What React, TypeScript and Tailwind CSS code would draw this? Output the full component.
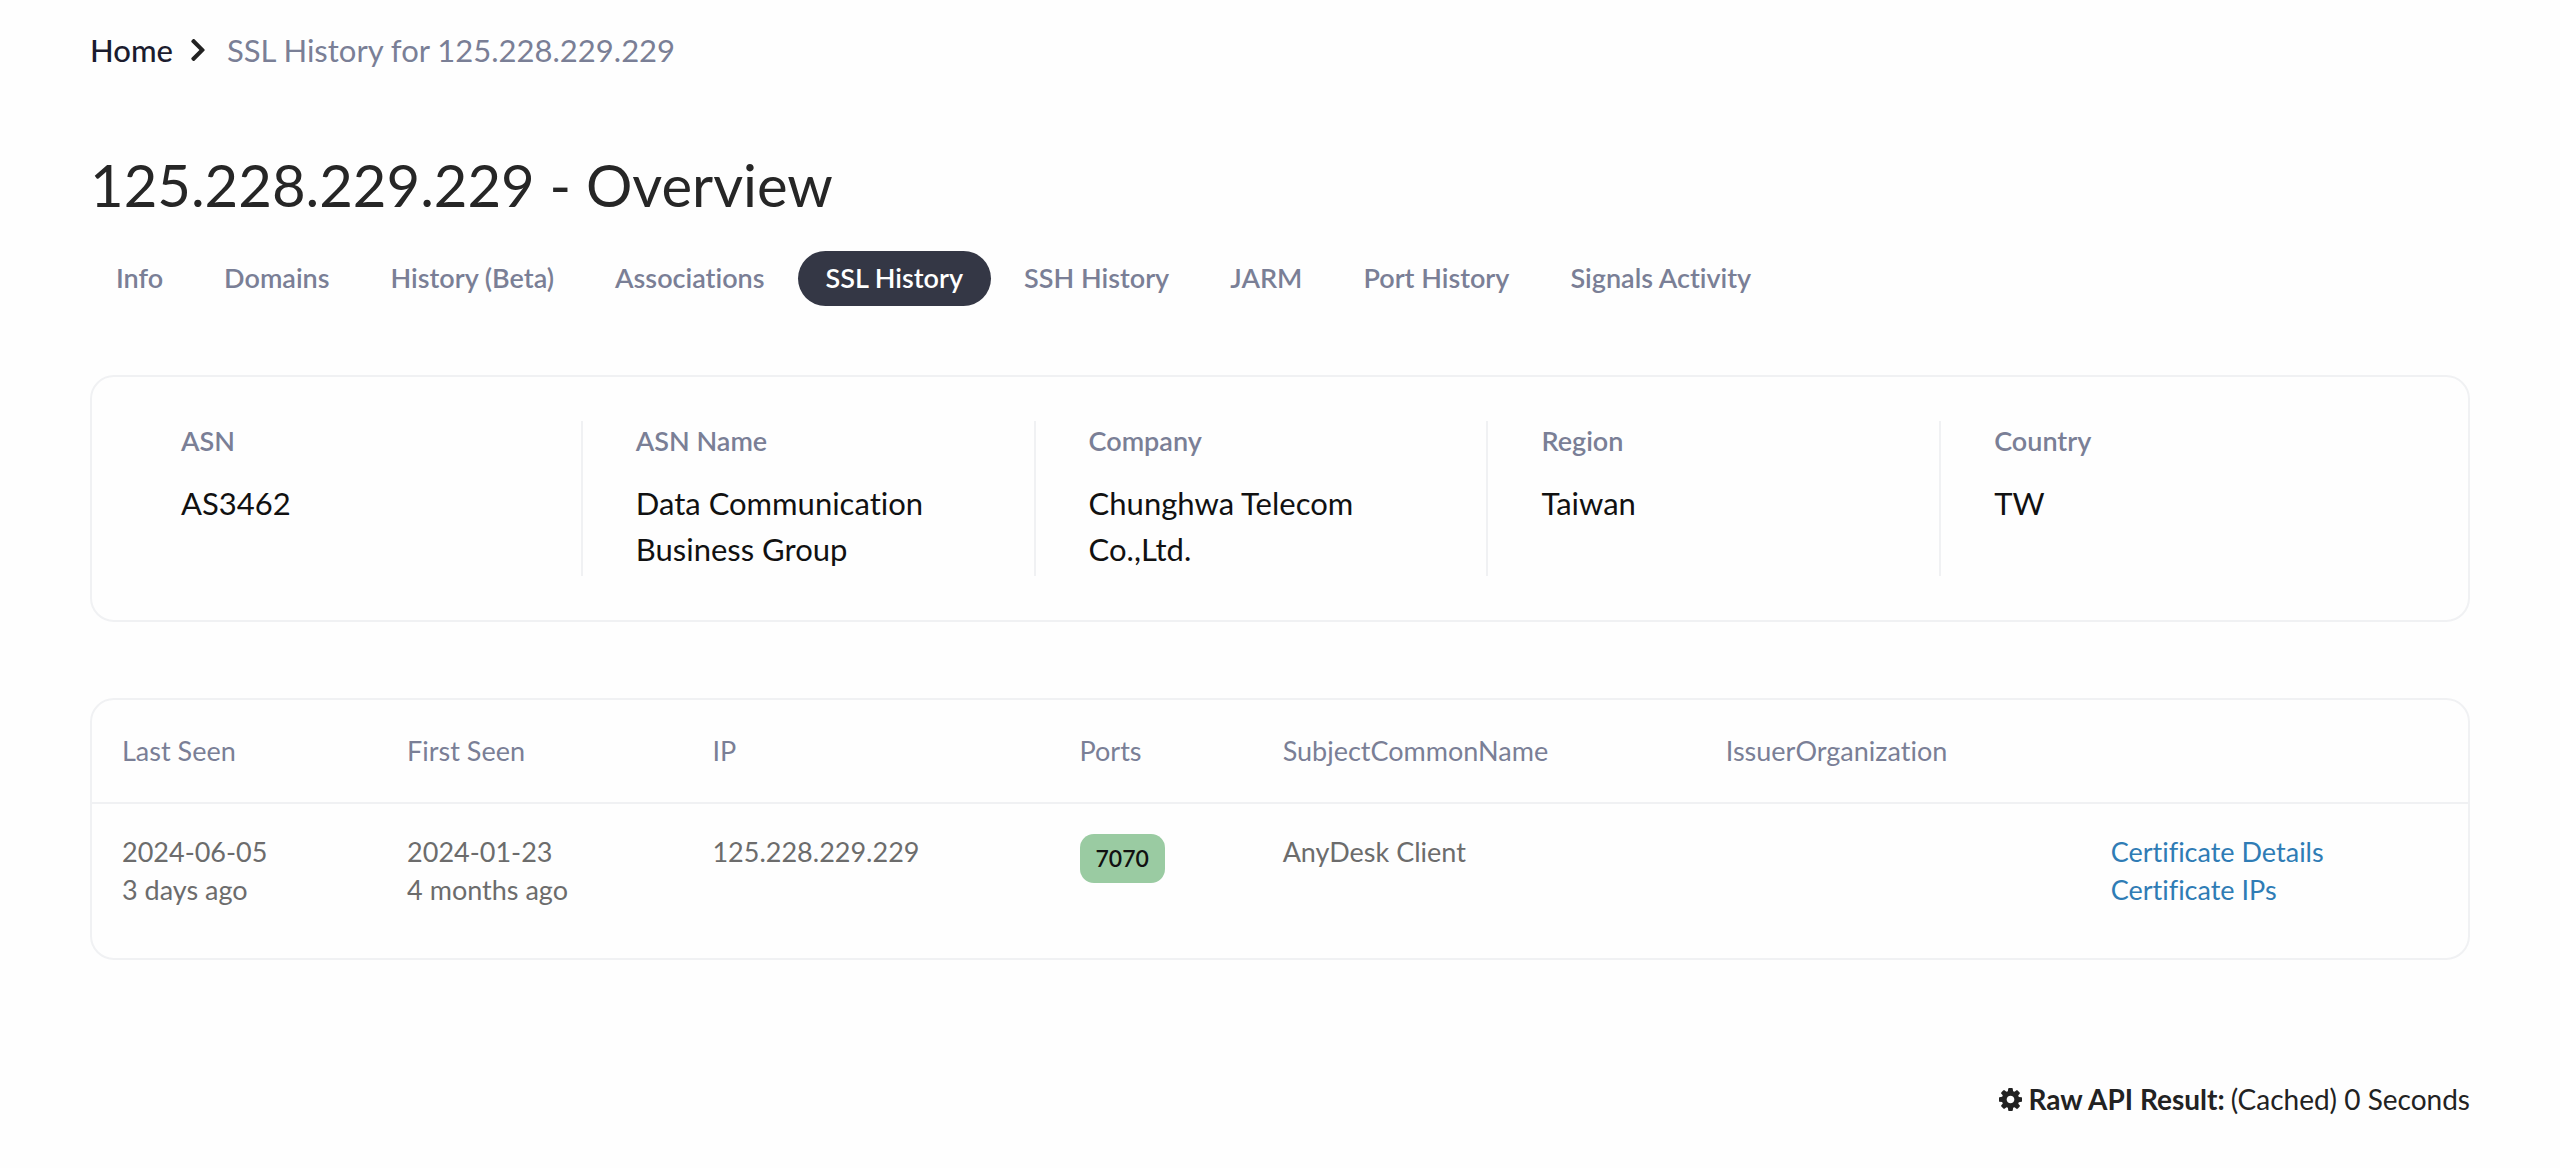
import clsx from 'clsx'
import { FaChevronRight } from 'react-icons/fa'

const ip = '125.228.229.229'

const tabs = [
  'Info',
  'Domains',
  'History (Beta)',
  'Associations',
  'SSL History',
  'SSH History',
  'JARM',
  'Port History',
  'Signals Activity',
]

const details = [
  { label: 'ASN', value: 'AS3462' },
  { label: 'ASN Name', value: 'Data Communication Business Group' },
  { label: 'Company', value: 'Chunghwa Telecom Co.,Ltd.' },
  { label: 'Region', value: 'Taiwan' },
  { label: 'Country', value: 'TW' },
]

const columns = [
  { name: 'Last Seen', width: 'w-[12%]' },
  { name: 'First Seen', width: 'w-[12.85%]' },
  { name: 'IP', width: 'w-[15.45%]' },
  { name: 'Ports', width: 'w-[8.55%]' },
  { name: 'SubjectCommonName', width: 'w-[18.65%]' },
  { name: 'IssuerOrganization', width: 'w-[16.2%]' },
  { name: '', width: 'w-[16.3%]' },
]

const rows = [
  {
    lastSeen: '2024-06-05',
    lastSeenAgo: '3 days ago',
    firstSeen: '2024-01-23',
    firstSeenAgo: '4 months ago',
    ip,
    port: '7070',
    subject: 'AnyDesk Client',
    issuer: '',
  },
]

const GearIcon = () => (
  <svg viewBox="0 128 1536 1536" className="mr-1.5 size-[23px]" fill="currentColor" aria-hidden="true">
    <path d="M1024 896q0-106-75-181t-181-75-181 75-75 181 75 181 181 75 181-75 75-181zm512-109v222q0 12-8 23t-20 13l-185 28q-19 54-39 91 35 50 107 138 10 12 10 25t-9 23q-27 37-99 108t-94 71q-12 0-26-9l-138-108q-44 23-91 38-16 136-29 186-7 28-36 28h-222q-14 0-24.5-8.5t-11.5-21.5l-28-184q-49-16-90-37l-141 107q-10 9-25 9-14 0-25-11-126-114-165-168-7-10-7-23 0-12 8-23 15-21 51-66.5t54-70.5q-27-50-41-99l-183-27q-13-2-21-12.5t-8-23.5v-222q0-12 8-23t19-13l186-28q14-46 39-92-40-57-107-138-10-12-10-24 0-10 9-23 26-36 98.5-107.5t94.5-71.5q13 0 26 10l138 107q44-23 91-38 16-136 29-186 7-28 36-28h222q14 0 24.5 8.5t11.5 21.5l28 184q49 16 90 37l142-107q9-9 24-9 13 0 25 10 129 119 165 170 7 8 7 22 0 12-8 23-15 21-51 66.5t-54 70.5q26 50 41 98l183 28q13 2 21 12.5t8 23.5z" />
  </svg>
)

const Breadcrumb = () => (
  <nav aria-label="Breadcrumb" className="flex items-center text-[31px] leading-10">
    <a href="#home" className="font-medium text-[#1b1c2e]">Home</a>
    <FaChevronRight size={26} className="ml-3 mr-4 text-[#222]" />
    <span className="text-[#7a7f96]">SSL History for {ip}</span>
  </nav>
)

const Tabs = () => (
  <nav aria-label="Sections" className="-ml-0.5 mt-8 flex flex-wrap gap-[5px]">
    {tabs.map((tab) => (
      <a
        key={tab}
        href={`#${tab}`}
        className={clsx(
          'rounded-full px-7 pb-0.5 text-[27px] font-semibold leading-[53px]',
          tab === 'SSL History' ? 'bg-[#343745] text-white' : 'text-[#7a7f96]'
        )}
      >
        {tab}
      </a>
    ))}
  </nav>
)

const DetailsCard = () => (
  <dl className="mt-[69px] grid grid-cols-5 rounded-3xl border-2 border-[#f0f1f3] py-11 pl-9 pr-[76px]">
    {details.map((item, index) => (
      <div key={item.label} className={clsx('min-h-[155px] px-[53px]', index > 0 && 'border-l-2 border-[#f0f1f3]')}>
        <dt className="text-[27px] font-semibold leading-10 text-[#7a7f96]">{item.label}</dt>
        <dd className="mt-[19px] text-[31px] leading-[46px] text-[#111]">{item.value}</dd>
      </div>
    ))}
  </dl>
)

const HistoryTable = () => (
  <div className="mt-[76px] overflow-hidden rounded-3xl border-2 border-[#f0f1f3] pb-5">
    <table className="w-full table-fixed text-left text-[27px] leading-[38px]">
      <thead>
        <tr className="border-b-2 border-[#f0f1f3]">
          {columns.map((col) => (
            <th key={col.name} scope="col" className={clsx('px-[30px] py-8 font-normal text-[#7a7f96]', col.width)}>
              {col.name}
            </th>
          ))}
        </tr>
      </thead>
      <tbody>
        {rows.map((row) => (
          <tr key={row.ip} className="align-top text-[#6c6c6c]">
            <td className="px-[30px] py-[29px]">
              <div>{row.lastSeen}</div>
              <div>{row.lastSeenAgo}</div>
            </td>
            <td className="px-[30px] py-[29px]">
              <div>{row.firstSeen}</div>
              <div>{row.firstSeenAgo}</div>
            </td>
            <td className="px-[30px] py-[29px]">{row.ip}</td>
            <td className="px-[30px] py-[30px]">
              <span className="inline-block rounded-[14px] bg-[#9acba2] px-4 text-[23px] font-semibold leading-[49px] text-[#111]">
                {row.port}
              </span>
            </td>
            <td className="px-[30px] py-[29px]">{row.subject}</td>
            <td className="px-[30px] py-[29px]">{row.issuer}</td>
            <td className="px-[30px] py-[29px] text-[#2f7cb5]">
              <a href="#certificate-details" className="block">Certificate Details</a>
              <a href="#certificate-ips" className="block">Certificate IPs</a>
            </td>
          </tr>
        ))}
      </tbody>
    </table>
  </div>
)

export default function App() {
  return (
    <div className="min-h-screen bg-[#fefefe] px-[90px] pt-[30px] font-[Lato,sans-serif] [font-variant-ligatures:no-common-ligatures]">
      <Breadcrumb />
      <main>
        <h1 className="mt-[81px] text-[58px] leading-[68px] text-[#262626]">{ip} - Overview</h1>
        <Tabs />
        <DetailsCard />
        <HistoryTable />
      </main>
      <footer className="mt-[120px] flex items-center justify-end text-[28px] leading-[38px] text-[#222]">
        <GearIcon />
        <strong className="mr-1.5 font-bold">Raw API Result:</strong>
        <span>(Cached) 0 Seconds</span>
      </footer>
    </div>
  )
}
